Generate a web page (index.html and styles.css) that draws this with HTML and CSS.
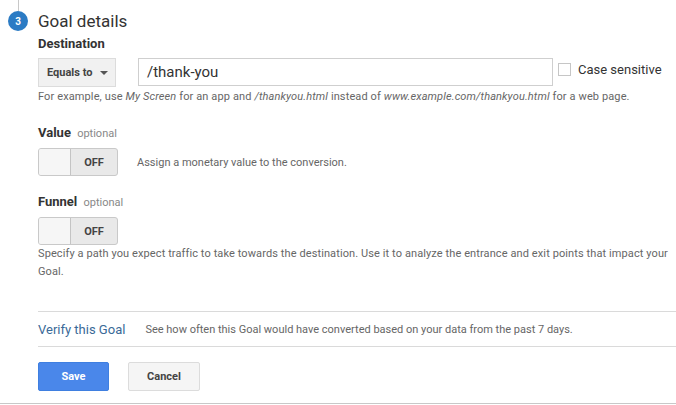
FILE: index.html
```html
<!DOCTYPE html>
<html>
<head>
<meta charset="utf-8">
<link rel="stylesheet" href="styles.css">
</head>
<body>
<div class="page">
  <div class="step-line"></div>
  <div class="header">
    <div class="step-num">3</div>
    <h1 class="title">Goal details</h1>
  </div>
  <div class="body">
    <div class="label">Destination</div>
    <div class="dest-row">
      <div class="select">Equals to <span class="caret"></span></div>
      <div class="input">/thank-you</div>
      <label class="check"><span class="box"></span>Case sensitive</label>
    </div>
    <div class="help">For example, use <i>My Screen</i> for an app and <i>/thankyou.html</i> instead of <i>www.example.com/thankyou.html</i> for a web page.</div>

    <div class="label sec">Value <span class="opt">optional</span></div>
    <div class="toggle-row">
      <div class="toggle"><span class="knob"></span><span class="state">OFF</span></div>
      <span class="toggle-desc">Assign a monetary value to the conversion.</span>
    </div>

    <div class="label sec funnel">Funnel <span class="opt">optional</span></div>
    <div class="toggle-row">
      <div class="toggle"><span class="knob"></span><span class="state">OFF</span></div>
    </div>
    <div class="help para">Specify a path you expect traffic to take towards the destination. Use it to analyze the entrance and exit points that impact your Goal.</div>

    <div class="verify">
      <a class="verify-link">Verify this Goal</a>
      <span class="verify-desc">See how often this Goal would have converted based on your data from the past 7 days.</span>
    </div>

    <div class="actions">
      <button class="btn primary">Save</button>
      <button class="btn">Cancel</button>
    </div>
  </div>
  <div class="bottom-rule"></div>
</div>
</body>
</html>
```

FILE: styles.css
```css
* { box-sizing: border-box; }
html, body { margin: 0; padding: 0; background: #fff; }
body {
  font-family: Roboto, "Liberation Sans", Arial, sans-serif;
  color: #333;
  width: 676px;
  height: 405px;
  overflow: hidden;
}
.step-line {
  width: 1px;
  height: 11px;
  margin-left: 18px;
  background: #c8c8c8;
}
.header {
  display: flex;
  align-items: center;
  height: 20px;
  padding-left: 8px;
}
.step-num {
  width: 20px;
  height: 20px;
  border-radius: 50%;
  background: #2b7bc4;
  color: #fff;
  font-size: 10px;
  font-weight: 700;
  display: flex;
  align-items: center;
  justify-content: center;
}
.title {
  margin: 0 0 0 10px;
  font-size: 17px;
  font-weight: 400;
  line-height: 20px;
  color: #333;
}
.body { padding-left: 38px; }
.label {
  margin-top: 4px;
  font-size: 13px;
  font-weight: 700;
  line-height: 18px;
  color: #333;
}
.label.sec { margin-top: 19px; }
.label.funnel { margin-top: 17px; }
.opt {
  font-size: 11px;
  font-weight: 400;
  color: #888;
  margin-left: 3px;
}
.dest-row {
  display: flex;
  align-items: flex-start;
  margin-top: 5px;
}
.select {
  width: 78px;
  height: 29px;
  background: #f1f1f1;
  border: 1px solid #dcdcdc;
  font-size: 11px;
  font-weight: 700;
  color: #444;
  display: flex;
  align-items: center;
  padding-left: 8px;
}
.caret {
  width: 0;
  height: 0;
  border-left: 4px solid transparent;
  border-right: 4px solid transparent;
  border-top: 4px solid #555;
  margin-left: 8px;
}
.input {
  width: 415px;
  height: 28px;
  margin-left: 22px;
  border: 1px solid #cfcfcf;
  font-size: 15px;
  color: #333;
  padding-left: 8px;
  line-height: 26px;
}
.check {
  display: flex;
  align-items: center;
  margin-left: 5px;
  margin-top: 4px;
  font-size: 13px;
  color: #333;
}
.box {
  width: 13px;
  height: 13px;
  border: 1px solid #c6c6c6;
  background: #fff;
  margin-right: 7px;
}
.help {
  margin-top: 2px;
  font-size: 11px;
  line-height: 16px;
  color: #666;
  letter-spacing: 0.12px;
}
.help i { font-style: italic; }
.help.para {
  margin-top: 0;
  line-height: 18px;
  width: 632px;
  letter-spacing: 0.1px;
}
.toggle-row {
  display: flex;
  align-items: center;
  margin-top: 5px;
}
.toggle {
  width: 80px;
  height: 28px;
  border: 1px solid #c9c9c9;
  border-radius: 3px;
  background: #e9e9e9;
  display: flex;
  overflow: hidden;
}
.knob {
  width: 32px;
  height: 100%;
  background: #f6f6f6;
  border-right: 1px solid #c4c4c4;
}
.state {
  flex: 1;
  display: flex;
  align-items: center;
  justify-content: center;
  font-size: 11px;
  font-weight: 700;
  color: #444;
}
.toggle-desc {
  margin-left: 19px;
  font-size: 11px;
  color: #666;
}
.verify {
  margin-top: 30px;
  height: 36px;
  border-top: 1px solid #dadada;
  border-bottom: 1px solid #dadada;
  display: flex;
  align-items: center;
}
.verify-link {
  font-size: 13px;
  color: #3a6a98;
}
.verify-desc {
  margin-left: 20px;
  font-size: 11px;
  color: #666;
}
.actions {
  display: flex;
  gap: 19px;
  margin-top: 15px;
}
.btn {
  width: 72px;
  height: 29px;
  border: 1px solid #dcdcdc;
  border-radius: 2px;
  background: #f5f5f5;
  font-family: inherit;
  font-size: 11px;
  font-weight: 700;
  color: #444;
  padding: 0;
}
.btn.primary {
  width: 71px;
  background: #4a87ea;
  border-color: #3f7fe0;
  color: #fff;
}
.bottom-rule {
  margin-top: 12px;
  height: 1px;
  background: #c8c8c8;
}
```
